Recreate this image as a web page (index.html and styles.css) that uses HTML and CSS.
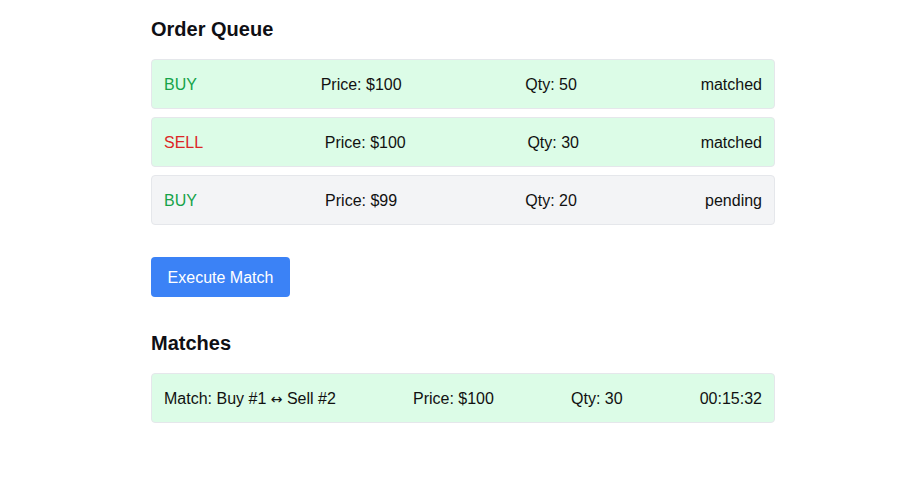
FILE: index.html
```html
<!DOCTYPE html>
<html lang="en">
<head>
<meta charset="utf-8">
<title>Order Queue</title>
<link rel="stylesheet" href="styles.css">
</head>
<body>
<main class="page">
  <h2 class="title">Order Queue</h2>
  <div class="list">
    <div class="row row-matched"><span class="side buy">BUY</span><span>Price: $100</span><span>Qty: 50</span><span>matched</span></div>
    <div class="row row-matched"><span class="side sell">SELL</span><span>Price: $100</span><span>Qty: 30</span><span>matched</span></div>
    <div class="row row-pending"><span class="side buy">BUY</span><span>Price: $99</span><span>Qty: 20</span><span>pending</span></div>
  </div>
  <button class="btn" type="button">Execute Match</button>
  <h2 class="title">Matches</h2>
  <div class="list">
    <div class="row row-matched"><span>Match: Buy #1 <span class="arrow">↔</span> Sell #2</span><span>Price: $100</span><span>Qty: 30</span><span>00:15:32</span></div>
  </div>
</main>
</body>
</html>
```
FILE: styles.css
```css
* { box-sizing: border-box; }
html, body { margin: 0; background: #fff; }
body {
  font-family: "Liberation Sans", Arial, sans-serif;
  font-size: 16px;
  line-height: 24px;
  color: #111;
}
.page {
  width: 775px;
  padding: 15px 0 0 151px;
  display: flex;
  flex-direction: column;
  align-items: flex-start;
}
.title {
  margin: 0 0 16px;
  font-size: 20px;
  line-height: 28px;
  font-weight: 700;
  color: #0f0f14;
}
.list {
  width: 100%;
  display: flex;
  flex-direction: column;
  gap: 8px;
}
.row {
  display: flex;
  justify-content: space-between;
  padding: 13px 12px 11px;
  border: 1px solid #e5e7eb;
  border-radius: 4px;
}
.row-matched { background: #dcfce7; }
.row-pending { background: #f3f4f6; }
.buy { color: #16a34a; }
.sell { color: #dc2626; }
.arrow {
  font-family: "DejaVu Sans", sans-serif;
  font-size: 14px;
}
.btn {
  margin: 32px 0;
  padding: 9px 16px 7px;
  width: 139px;
  height: 40px;
  border: none;
  border-radius: 4px;
  background: #3b82f6;
  color: #fff;
  font-family: inherit;
  font-size: 16px;
  line-height: 24px;
}
```
